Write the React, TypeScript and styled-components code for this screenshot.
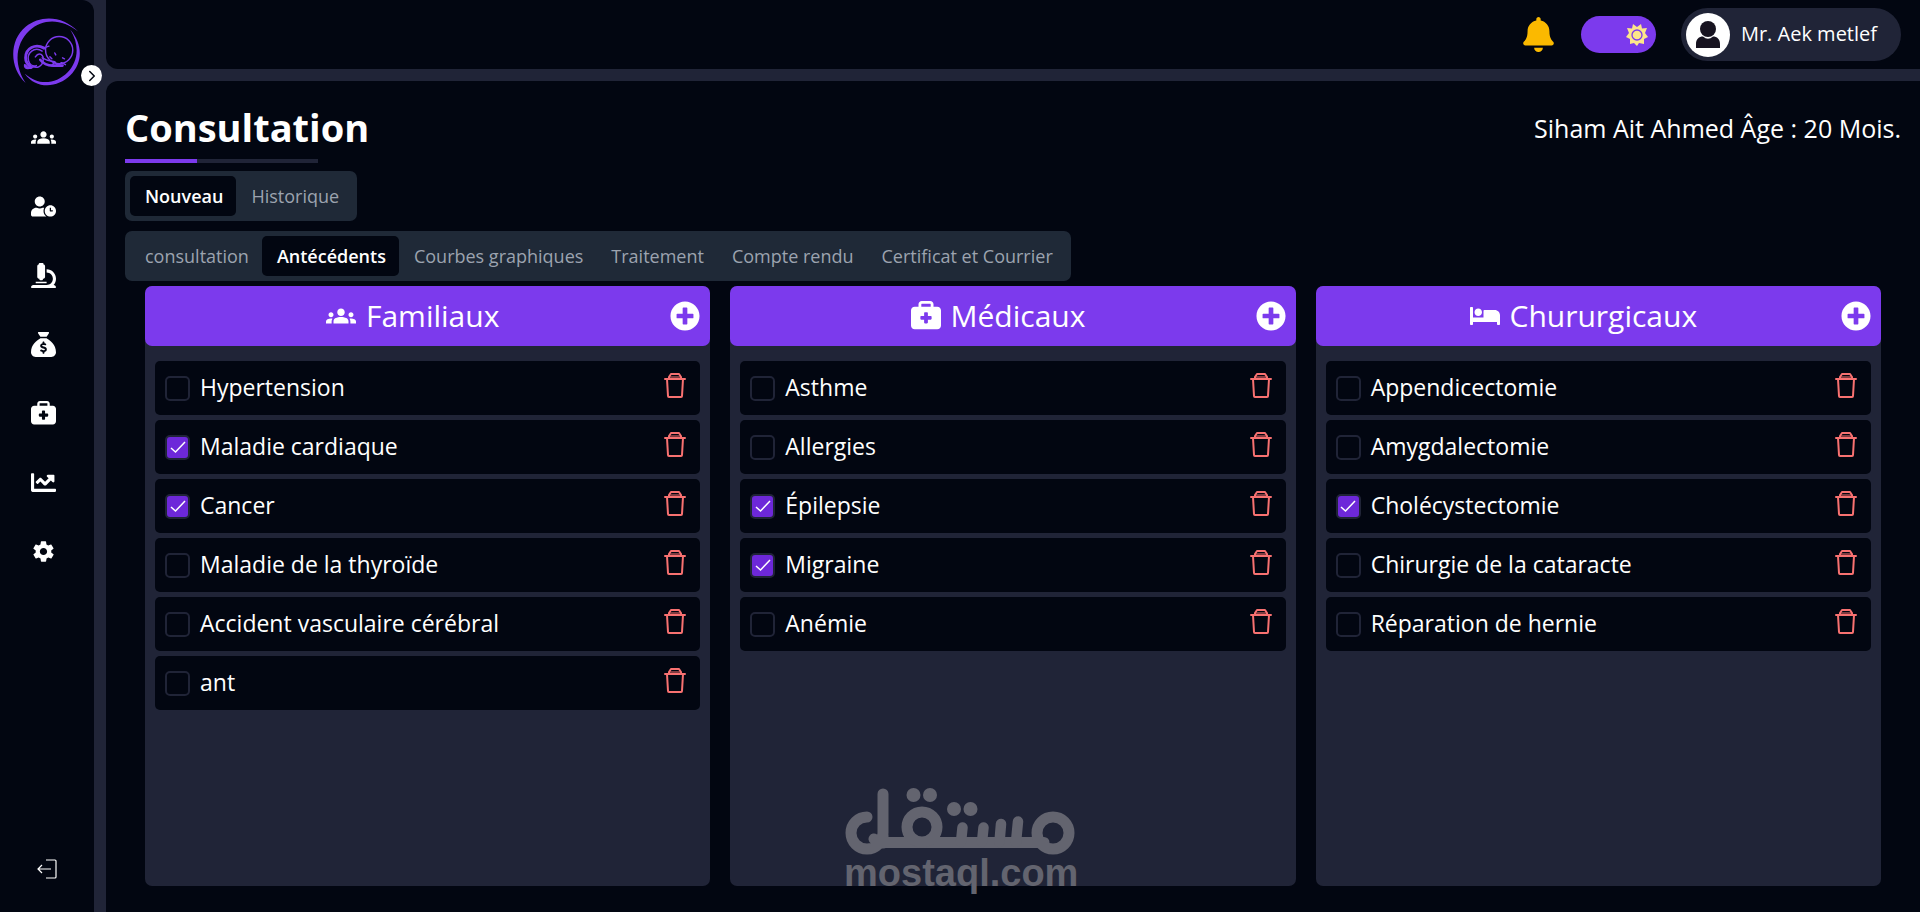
import React, { useState } from 'react';
import styled, { createGlobalStyle, css } from 'styled-components';
import { ChevronRight } from 'lucide-react';
import { MdGroups } from 'react-icons/md';
import { FaUserClock, FaMicroscope, FaBell, FaBed, FaPlusCircle, FaChartLine } from 'react-icons/fa';
import { FaSackDollar, FaBriefcaseMedical } from 'react-icons/fa6';
import { IoMdSettings } from 'react-icons/io';

const ink = '#020611';
const slate = '#202437';
const violet = '#7c3aed';

const GlobalStyle = createGlobalStyle`
  *, *::before, *::after { box-sizing: border-box; }
  body {
    margin: 0;
    background: ${slate};
    color: #fff;
    font-family: "Open Sans", "Noto Sans", sans-serif;
  }
  button, input { font: inherit; color: inherit; margin: 0; }
  button { background: none; border: 0; padding: 0; cursor: pointer; }
  svg { display: block; }
`;

const Shell = styled.div`
  display: flex;
  gap: 12px;
  min-height: 100vh;
`;

const Sidebar = styled.aside`
  position: relative;
  flex: 0 0 94px;
  display: flex;
  flex-direction: column;
  background: ${ink};
  border-top-right-radius: 12px;
  padding: 17px 0 32px;
`;

const LogoLink = styled.a`
  margin-left: 12px;
  height: 70px;
  width: 70px;
  color: ${violet};
`;

const Expand = styled.button`
  position: absolute;
  top: 65px;
  right: -8px;
  display: grid;
  place-items: center;
  width: 21px;
  height: 21px;
  border-radius: 50%;
  background: #fff;
  color: ${ink};
`;

const Nav = styled.nav`
  display: flex;
  flex-direction: column;
  gap: 44px;
  width: 87px;
  padding-top: 38px;
  align-items: center;
  flex: 1;
`;

const NavLink = styled.a`
  display: grid;
  color: #fff;
  height: 25px;
`;

const Logout = styled.button`
  width: 87px;
  display: grid;
  place-items: center;
  padding-left: 6px;
`;

const Body = styled.div`
  flex: 1;
  min-width: 0;
  display: flex;
  flex-direction: column;
  gap: 12px;
`;

const TopBar = styled.header`
  display: flex;
  align-items: center;
  justify-content: flex-end;
  height: 69px;
  padding: 0 19px;
  background: ${ink};
  border-bottom-left-radius: 12px;
`;

const Bell = styled.button`
  display: grid;
  color: #fbb900;
  margin-right: 25px;
`;

const ThemeToggle = styled.button`
  display: flex;
  align-items: center;
  justify-content: flex-end;
  width: 75px;
  height: 37px;
  padding: 0 8px;
  margin-right: 25px;
  border-radius: 20px;
  background: ${violet};
`;

const UserChip = styled.button`
  display: flex;
  align-items: center;
  gap: 11px;
  height: 53px;
  padding: 0 24px 0 5px;
  border-radius: 27px;
  background: ${slate};
  font-size: 20px;
`;

/* Lifts a label's baseline slightly against the icon or box beside it. */
const Caption = styled.span`
  padding-bottom: 2px;
`;

const Main = styled.main`
  flex: 1;
  display: flex;
  flex-direction: column;
  align-items: flex-start;
  padding: 19px 19px 26px;
  background: ${ink};
  border-top-left-radius: 12px;
`;

const Heading = styled.div`
  display: flex;
  align-items: center;
  justify-content: space-between;
  align-self: stretch;
  height: 56px;
`;

const Title = styled.h1`
  margin: 0;
  padding-bottom: 2px;
  font-size: 38px;
  line-height: 54px;
`;

const Patient = styled.p`
  margin: 0;
  font-size: 25px;
`;

const Underline = styled.div`
  width: 193px;
  height: 4px;
  margin: 3px 0 8px;
  background: linear-gradient(to right, ${violet} 72px, ${slate} 72px);
`;

const Tabs = styled.div`
  display: flex;
  padding: 5px;
  height: 50px;
  border-radius: 7px;
  background: #1f2937;
`;

const Tab = styled.button<{ $on?: boolean }>`
  padding: 0 13px 0 15px;
  border-radius: 5px;
  font-size: 18px;
  color: #9ca3af;
  ${p => p.$on && css`
    background: ${ink};
    color: #fff;
    font-weight: 600;
  `}
`;

const TabStack = styled.div`
  display: flex;
  flex-direction: column;
  align-items: flex-start;
  gap: 10px;
`;

const Columns = styled.div`
  flex: 1;
  align-self: stretch;
  display: grid;
  grid-template-columns: repeat(3, 1fr);
  gap: 20px;
  padding: 5px 20px 0;
`;

const Card = styled.section`
  border-radius: 7px;
  background: ${slate};
`;

const CardHead = styled.div`
  display: flex;
  align-items: center;
  height: 60px;
  padding: 0 10px;
  border-radius: 7px;
  background: ${violet};
`;

const CardTitle = styled.h2`
  flex: 1;
  display: flex;
  align-items: center;
  justify-content: center;
  gap: 10px;
  margin: 0;
  font-size: 30px;
  font-weight: 400;
`;

const List = styled.ul`
  list-style: none;
  display: flex;
  flex-direction: column;
  gap: 5px;
  margin: 0;
  padding: 15px 10px;
`;

const Item = styled.li`
  display: flex;
  align-items: center;
  justify-content: space-between;
  height: 54px;
  padding: 0 14px 0 10px;
  border-radius: 5px;
  background: ${ink};
`;

const ItemLabel = styled.label`
  display: flex;
  align-items: center;
  gap: 10px;
  font-size: 23px;
`;

const Box = styled.span`
  display: grid;
  width: 25px;
  height: 25px;
`;

const Check = styled.input`
  grid-area: 1 / 1;
  appearance: none;
  width: 25px;
  height: 25px;
  border: 2px solid ${slate};
  border-radius: 5px;
  &:checked { background: #6d28d9; }
`;

const Tick = styled.svg`
  grid-area: 1 / 1;
  place-self: center;
  pointer-events: none;
`;

const Delete = styled.button`
  display: grid;
  color: #f87171;
  padding-bottom: 5px;
`;

const Watermark = styled.div`
  position: absolute;
  top: 785px;
  left: 50%;
  margin-left: -116px;
  width: 232px;
  color: #63646f;
  pointer-events: none;
`;

const WatermarkText = styled.div`
  font: bold 38px/36px "Liberation Sans", sans-serif;
  text-align: center;
`;

const BabyLogo = () => (
  <svg width="70" height="70" viewBox="-1 -1 72 72" fill="none" stroke="currentColor" strokeLinecap="round" strokeLinejoin="round">
    <path fill="currentColor" stroke="none" d="M67 14C52-2 29-4 13 9C-4 23-4 51 13 67C0 47 3 26 17 13C31 0 51 1 67 14Z" />
    <path fill="currentColor" stroke="none" d="M59 12C69 28 67 45 56 56C44 68 26 70 12 57C24 74 46 72 59 59C72 46 72 27 59 12Z" />
    <circle cx="47.500" cy="33" r="14" strokeWidth="1.500" />
    <path strokeWidth="3" d="M32 31C23 26 13 31 13 41C13 45 15 48 18 50" />
    <path strokeWidth="1.500" d="M30 34C22 29 14 36 16 44C17 48 20 50 24 49M12 48C11 53 17 53 21 50M23 40C27 34 32 38 31 44C30 50 25 52 20 50" />
    <path strokeWidth="2.600" d="M13 49Q14 52 19 51M28 43C31 47 34 49 41 49H51" />
    <path strokeWidth="1.500" d="M30 41C35 44 38 44 43 45M40 49L43 45L46 49L50 46L54 48M34 30L37 29M38 40L40 42M43 36L44 38M51 41L53 42" />
  </svg>
);

const LogoutIcon = () => (
  <svg width="22" height="22" viewBox="0 0 22 22" fill="none" stroke="currentColor" strokeWidth="1.200">
    <path d="M10 2H19Q20 2 20 3V19Q20 20 19 20H10M15 11H2M6 7L2 11L6 15" />
  </svg>
);

const SunIcon = () => (
  <svg width="22" height="22" viewBox="-11 -11 22 22">
    <path fill="#fde68a" d="M0-8L4-11L5-6.500L10-7L8-2L11 2L7 4L7 9L2 8L0 11L-3 8L-7 9L-7 4L-11 2L-8-2L-10-7L-5-6.500L-4-11Z" />
    <circle r="5" fill="none" stroke={violet} strokeWidth="1.300" />
  </svg>
);

const Avatar = () => (
  <svg width="44" height="44" viewBox="0 0 44 44">
    <circle cx="22" cy="22" r="22" fill="#fff" />
    <circle cx="22" cy="16" r="8" fill="#171320" />
    <path fill="#171320" d="M10 35V31C10 26 13 23.500 17 23.500Q22 28 27 23.500C31 23.500 34 26 34 31V35Z" />
  </svg>
);

const TrashIcon = () => (
  <svg width="22" height="25" viewBox="0 0 22 25" fill="none" stroke="currentColor" strokeWidth="2" strokeLinejoin="round" strokeLinecap="round">
    <path d="M1 6H21M5 6V4L7 1H15L17 4V6M3 6L4 23Q4 24 5 24H17Q18 24 18 23L19 6" />
    <path strokeWidth="1" d="M6 4H16" />
  </svg>
);

const WatermarkLogo = () => (
  <svg width="232" height="70" viewBox="0 0 232 70" fill="none" stroke="currentColor" strokeWidth="11" strokeLinecap="round">
    <path d="M23 32A16 16 0 1 0 39 48V9M39 58V50M30 54Q36 58 42 57.500H200" />
    <path strokeWidth="10.500" d="M117 57L118.500 42.500M138 57L139.500 42.500M155.500 57L157 39M172 57L174 36.500" />
    <circle cx="78" cy="42" r="15" />
    <circle cx="209" cy="48" r="16" />
    <g fill="currentColor" stroke="none">
      <circle cx="69.500" cy="10" r="7" />
      <circle cx="86" cy="10" r="7" />
      <circle cx="110" cy="24" r="7" />
      <circle cx="126.500" cy="24" r="7" />
    </g>
  </svg>
);

const navItems = [
  { label: 'Patients', icon: <MdGroups size={25} /> },
  { label: "Salle d'attente", icon: <FaUserClock size={25} /> },
  { label: 'Analyses', icon: <FaMicroscope size={25} /> },
  { label: 'Caisse', icon: <FaSackDollar size={25} /> },
  { label: 'Consultations', icon: <FaBriefcaseMedical size={25} /> },
  { label: 'Statistiques', icon: <FaChartLine size={25} /> },
  { label: 'Paramètres', icon: <IoMdSettings size={25} /> },
];

type Entry = [string, boolean];
const cards: { title: string; icon: React.ReactNode; entries: Entry[] }[] = [
  {
    title: 'Familiaux',
    icon: <MdGroups size={30} />,
    entries: [['Hypertension', false], ['Maladie cardiaque', true], ['Cancer', true], ['Maladie de la thyroïde', false], ['Accident vasculaire cérébral', false], ['ant', false]],
  },
  {
    title: 'Médicaux',
    icon: <FaBriefcaseMedical size={30} />,
    entries: [['Asthme', false], ['Allergies', false], ['Épilepsie', true], ['Migraine', true], ['Anémie', false]],
  },
  {
    title: 'Chururgicaux',
    icon: <FaBed size={30} />,
    entries: [['Appendicectomie', false], ['Amygdalectomie', false], ['Cholécystectomie', true], ['Chirurgie de la cataracte', false], ['Réparation de hernie', false]],
  },
];

const Row = ({ name, initial }: { name: string; initial: boolean }) => {
  const [on, setOn] = useState(initial);
  return (
    <Item>
      <ItemLabel>
        <Box>
          <Check type="checkbox" checked={on} onChange={() => setOn(!on)} />
          {on && (
            <Tick width="16" height="16" viewBox="0 0 16 16" fill="none" stroke="#fff" strokeWidth="1.500">
              <path d="M1 9L5.500 13L15 3" />
            </Tick>
          )}
        </Box>
        <Caption>{name}</Caption>
      </ItemLabel>
      <Delete aria-label={`Supprimer ${name}`}><TrashIcon /></Delete>
    </Item>
  );
};

export default function App() {
  return (
    <>
      <GlobalStyle />
      <Shell>
        <Sidebar>
          <LogoLink href="#" aria-label="Accueil"><BabyLogo /></LogoLink>
          <Expand aria-label="Ouvrir le menu"><ChevronRight size={18} /></Expand>
          <Nav>
            {navItems.map(n => (
              <NavLink key={n.label} href="#" aria-label={n.label}>{n.icon}</NavLink>
            ))}
          </Nav>
          <Logout aria-label="Déconnexion"><LogoutIcon /></Logout>
        </Sidebar>
        <Body>
          <TopBar>
            <Bell aria-label="Notifications"><FaBell size={35} /></Bell>
            <ThemeToggle aria-label="Thème"><SunIcon /></ThemeToggle>
            <UserChip><Avatar /><Caption>Mr. Aek metlef</Caption></UserChip>
          </TopBar>
          <Main>
            <Heading>
              <Title>Consultation</Title>
              <Patient>Siham Ait Ahmed Âge : 20 Mois.</Patient>
            </Heading>
            <Underline />
            <TabStack>
              <Tabs>
                <Tab $on>Nouveau</Tab>
                <Tab>Historique</Tab>
              </Tabs>
              <Tabs>
                <Tab>consultation</Tab>
                <Tab $on>Antécédents</Tab>
                <Tab>Courbes graphiques</Tab>
                <Tab>Traitement</Tab>
                <Tab>Compte rendu</Tab>
                <Tab>Certificat et Courrier</Tab>
              </Tabs>
            </TabStack>
            <Columns>
              {cards.map(c => (
                <Card key={c.title}>
                  <CardHead>
                    <CardTitle>{c.icon}<Caption>{c.title}</Caption></CardTitle>
                    <button aria-label={`Ajouter ${c.title}`}><FaPlusCircle size={30} /></button>
                  </CardHead>
                  <List>
                    {c.entries.map(([name, on]) => <Row key={name} name={name} initial={on} />)}
                  </List>
                </Card>
              ))}
            </Columns>
          </Main>
        </Body>
      </Shell>
      <Watermark>
        <WatermarkLogo />
        <WatermarkText>mostaql.com</WatermarkText>
      </Watermark>
    </>
  );
}
